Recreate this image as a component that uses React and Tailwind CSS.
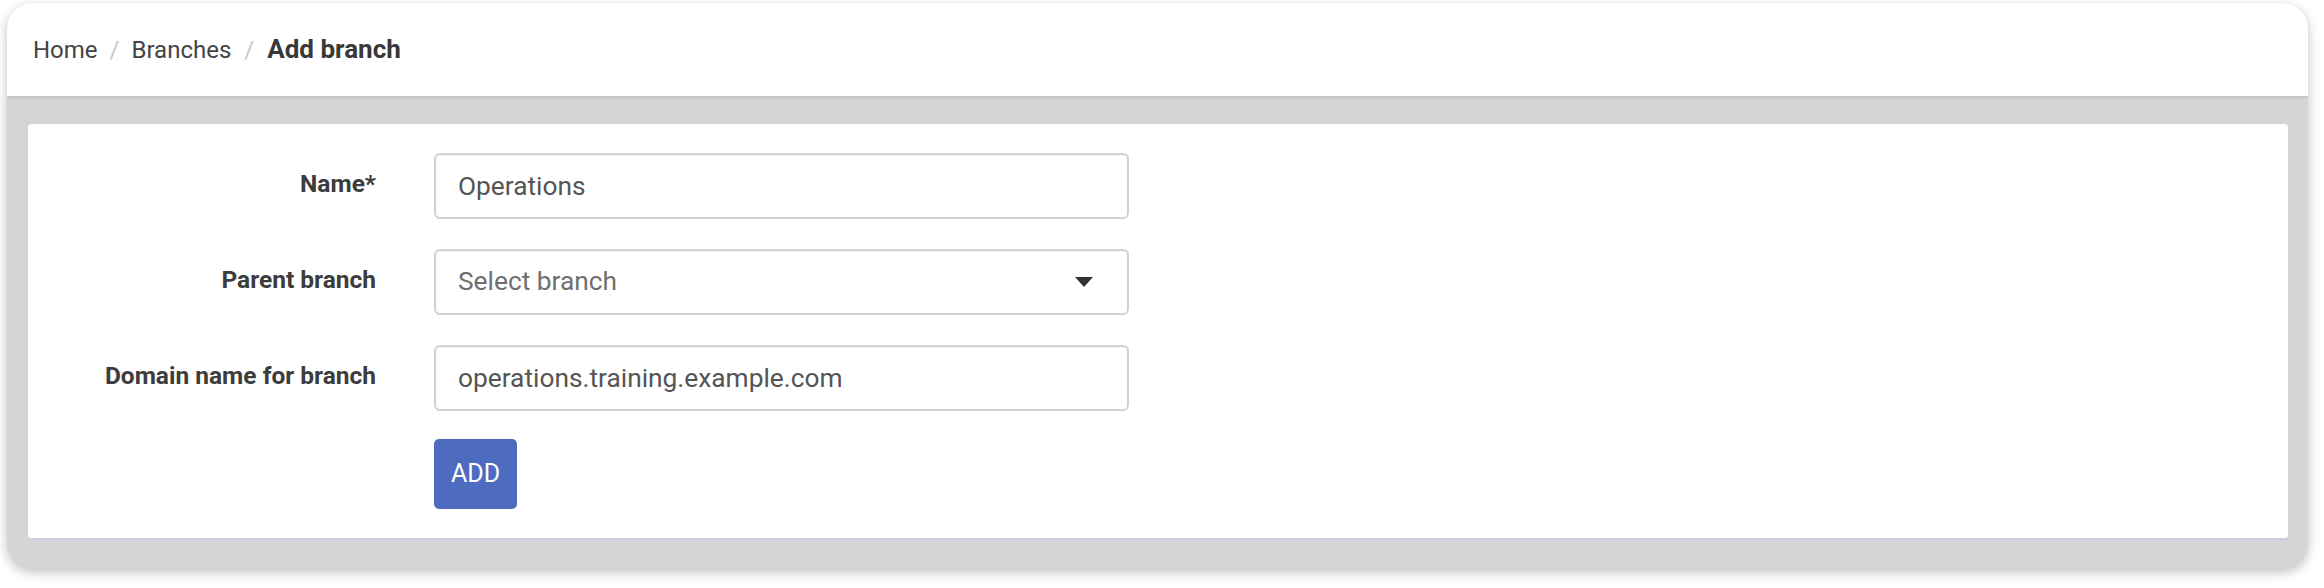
import React from 'react';

const Breadcrumb = () => (
    <div className="flex items-center h-[93px] pl-[26px] text-[24px] text-[#444]">
        <span>Home</span>
        <span className="px-[12px] text-[#c8c8c8]">/</span>
        <span>Branches</span>
        <span className="px-[13px] text-[#c8c8c8]">/</span>
        <span className="font-bold text-[26px] text-[#383838]">Add branch</span>
    </div>
);

const Field = ({ label, children }) => (
    <>
        <div className="flex items-center justify-end h-[66px] pb-[4px] font-bold text-[24.5px] text-[#3c3c3c]">
            {label}
        </div>
        {children}
    </>
);

const inputClass =
    'w-full h-[66px] rounded-[6px] border-2 border-[#d2d2d2] bg-white px-[22px] text-[26.3px] text-[#555] outline-none shadow-[inset_0_1px_1px_rgba(0,0,0,0.05)]';

const App = () => {
    return (
        <div className="w-[2324px] h-[588px] bg-white pl-[7px] pr-[16px] pt-[3px] font-['Roboto',sans-serif]">
            <div className="w-full h-[565px] rounded-[25px] overflow-hidden bg-[#d5d5d5] shadow-[0_4px_12px_rgba(0,0,0,0.25)] flex flex-col">
                <div className="bg-white shadow-[0_2px_2px_rgba(0,0,0,0.08)]">
                    <Breadcrumb />
                </div>
                <div className="flex-1 pt-[28px] pl-[21px] pr-[20px] pb-[28px]">
                    <div className="h-full bg-white rounded-[4px] border-b-2 border-[#c9cede] pt-[29px]">
                        <div className="grid grid-cols-[348px_695px] gap-x-[58px] gap-y-[30px]">
                            <Field label="Name*">
                                <input className={inputClass} defaultValue="Operations" />
                            </Field>
                            <Field label="Parent branch">
                                <div className={inputClass + ' flex items-center justify-between'}>
                                    <span className="text-[#6f6f6f]">Select branch</span>
                                    <svg width="18" height="10" viewBox="0 0 18 10" className="mr-[12px]">
                                        <path d="M0 0 L18 0 L9 10 Z" fill="#333" />
                                    </svg>
                                </div>
                            </Field>
                            <Field label="Domain name for branch">
                                <input className={inputClass} defaultValue="operations.training.example.com" />
                            </Field>
                            <div />
                            <div>
                                <button className="h-[70px] w-[83px] rounded-[5px] bg-[#4d6bbf] text-white text-[25px] -mt-[2px]">
                                    ADD
                                </button>
                            </div>
                        </div>
                    </div>
                </div>
            </div>
        </div>
    );
};

export default App;
